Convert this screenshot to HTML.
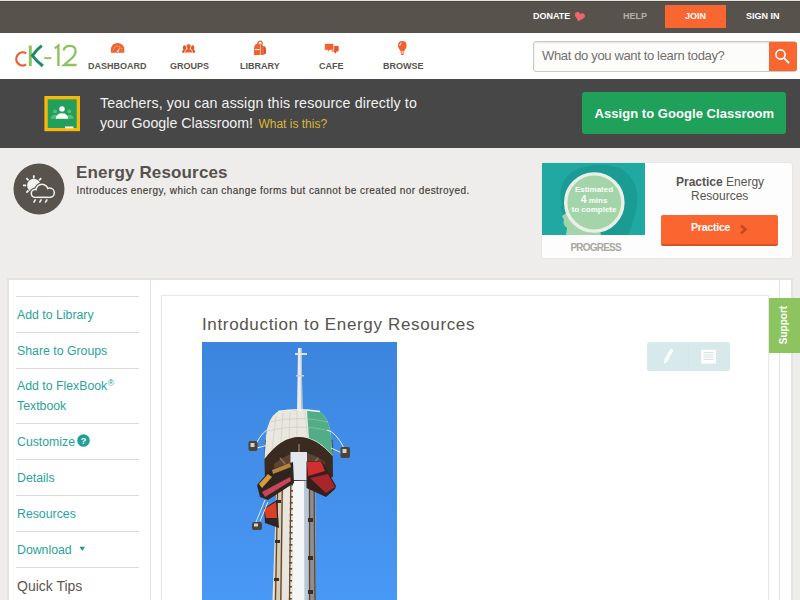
<!DOCTYPE html>
<html><head><meta charset="utf-8">
<style>
*{margin:0;padding:0;box-sizing:border-box}
html,body{width:800px;height:600px;overflow:hidden;background:#eeedeb;font-family:"Liberation Sans",sans-serif}
.a{position:absolute;white-space:nowrap;line-height:1}
#top{position:absolute;left:0;top:1px;width:800px;height:32px;background:#57534c}
#top0{position:absolute;left:0;top:0;width:800px;height:1px;background:#e8e5df}
#top1{position:absolute;left:0;top:1px;width:800px;height:1px;background:#4b4841;z-index:1}
#nav{position:absolute;left:0;top:33px;width:800px;height:46px;background:#fff}
#ban{position:absolute;left:0;top:79px;width:800px;height:69px;background:#474747}
.tb{font-weight:bold;font-size:9px;color:#fff}
.nt{font-weight:bold;font-size:9px;color:#58544e}
.sl{font-size:12.3px;color:#2aa498}
.dv{position:absolute;left:16px;width:123px;height:1px;background:#dcdad6}
</style></head><body>
<div id="top0"></div>
<div id="top"></div><div id="top1"></div>
<!-- top bar items -->
<div class="a tb" style="left:533px;top:12px">DONATE</div>
<svg class="a" style="left:573.5px;top:12px;transform:rotate(14deg)" width="11" height="10" viewBox="0 0 11 10"><path d="M5.5 9.5 L1.2 5.2 C-0.3 3.6 0.4 0.8 2.8 0.6 C4 0.5 5 1.3 5.5 2.2 C6 1.3 7 0.5 8.2 0.6 C10.6 0.8 11.3 3.6 9.8 5.2 Z" fill="#f2636a"/></svg>
<div class="a tb" style="left:623px;top:12px;color:#b4b0a9">HELP</div>
<div class="a" style="left:665px;top:5px;width:61px;height:23px;background:#fa6630"></div>
<div class="a tb" style="left:685px;top:12px">JOIN</div>
<div class="a tb" style="left:746px;top:12px">SIGN IN</div>

<div id="nav"></div>
<!-- logo -->
<svg class="a" style="left:0;top:33px" width="90" height="46" viewBox="0 33 90 46">
 <path d="M26.2 53.2 A6.6 6.6 0 1 0 26.2 64.6" fill="none" stroke="#e8623a" stroke-width="2.3"/>
 <rect x="28.8" y="45.5" width="3" height="20.7" fill="#8dc35e"/>
 <path d="M41.8 45.6 Q36 50 32.4 55.6 Q36 60.5 42.8 66" fill="none" stroke="#1b8c67" stroke-width="3"/>
 <rect x="44.2" y="57.2" width="7" height="1.9" fill="#8dc35e"/>
 <path d="M54.8 48.4 L58.4 45.6 L58.4 66.1" fill="none" stroke="#8dc35e" stroke-width="2.4"/>
 <path d="M63.6 50.5 Q64.5 45.9 69.8 45.9 Q75.6 45.9 75.6 51.2 Q75.6 54.5 71.5 58.5 L64 65 L76.6 65" fill="none" stroke="#8dc35e" stroke-width="2.3"/>
</svg>

<!-- nav items -->
<svg class="a" style="left:110px;top:42px" width="16" height="12" viewBox="110 42 16 12"><path d="M110.9 52.8 L110.9 49.6 A6.7 6.7 0 0 1 124.3 49.6 L124.3 52.8 Z" fill="#f0622f"/><path d="M113.3 50.4 A4.3 4.3 0 0 1 121.9 50.4" fill="none" stroke="#fbd3c2" stroke-width="1" stroke-dasharray="1.1 1"/><path d="M116.4 52 L119.8 47.2 L118.6 52 Z" fill="#fde6dc"/></svg>
<div class="a nt" style="left:88px;top:61.5px">DASHBOARD</div>
<svg class="a" style="left:181px;top:43px" width="16" height="11" viewBox="181 43 16 11"><path d="M182 52.8 Q182 50 183.6 49.6 Q182.6 48.6 182.8 47 Q183.2 45.2 184.6 45.2 Q186 45.2 186.3 47 Q186.5 48.6 185.6 49.6 Q187.2 50 187.2 52.8 Z" fill="#df5530"/><path d="M190 52.8 Q190 50 191.6 49.6 Q190.6 48.6 190.8 47 Q191.2 45.2 192.6 45.2 Q194 45.2 194.3 47 Q194.5 48.6 193.6 49.6 Q195.3 50 195.3 52.8 Z" fill="#df5530"/><path d="M184.6 52.8 Q184.6 49.4 187.2 48.8 Q186 47.6 186.2 45.8 Q186.6 43.8 188.6 43.8 Q190.6 43.8 191 45.8 Q191.2 47.6 190 48.8 Q192.6 49.4 192.6 52.8 Z" fill="#f25f2f" stroke="#fff" stroke-width="0.6"/></svg>
<div class="a nt" style="left:170px;top:61.5px">GROUPS</div>
<svg class="a" style="left:252px;top:40px" width="16" height="16" viewBox="252 40 16 16"><path d="M257.6 44.2 Q258.2 41 260.4 41 Q262.6 41.3 262.2 44.4" stroke="#e05a30" stroke-width="1.2" fill="none"/><path d="M263.2 46 Q266 46.4 266 49.2 L266 53 Q266 54.2 264.6 54.2 L263.2 54.2 Z" fill="#d9552e"/><path d="M254 55 L254 48.4 Q254 43.6 258.7 43.6 Q263.6 43.6 263.6 48.4 L263.6 55 Z" fill="#f0622f"/><path d="M254.8 49.6 L259.6 49.6" stroke="#fff" stroke-width="1"/><path d="M260.4 44.4 L260.4 55" stroke="#fde0d4" stroke-width="0.7"/></svg>
<div class="a nt" style="left:240px;top:61.5px">LIBRARY</div>
<svg class="a" style="left:323px;top:42px" width="17" height="13" viewBox="323 42 17 13"><path d="M331.5 46 L338.6 46 L338.6 51.6 L336.4 51.6 L335.8 53.8 L333.6 51.6 L331.5 51.6 Z" fill="#e4572e"/><path d="M324.6 43.4 L333.8 43.4 L333.8 50.2 L329.6 50.2 L327.4 52.4 L327.6 50.2 L324.6 50.2 Z" fill="#f0622f" stroke="#fff" stroke-width="0.7"/></svg>
<div class="a nt" style="left:319px;top:61.5px">CAFE</div>
<svg class="a" style="left:396px;top:40px" width="13" height="16" viewBox="396 40 13 16"><path d="M402.3 41 Q406.6 41 406.6 45.4 Q406.6 47.6 405.2 49.2 Q404.3 50.2 404.2 51.4 L400.4 51.4 Q400.3 50.2 399.4 49.2 Q398 47.6 398 45.4 Q398 41 402.3 41Z" fill="#f0622f"/><rect x="400.4" y="51.8" width="3.8" height="1.3" fill="#f3a57f"/><path d="M400.6 53.5 L404 53.5 L403.2 55 L401.4 55 Z" fill="#e4572e"/><path d="M399.8 45.6 Q399.8 43.4 401.6 42.8" stroke="#fff" stroke-width="1" fill="none"/></svg>
<div class="a nt" style="left:383px;top:61.5px">BROWSE</div>

<!-- search -->
<div class="a" style="left:533px;top:41px;width:264px;height:31px;border:1.5px solid #cbc8c0;border-radius:3px;background:#fcfcfb;box-shadow:inset 0 1px 2px #e6e4e0"></div>
<div class="a" style="left:542px;top:49px;font-size:13px;color:#72706c;letter-spacing:-0.35px">What do you want to learn today?</div>
<div class="a" style="left:769px;top:42px;width:28px;height:28.5px;background:#fa6630;border-radius:0 2px 2px 0"></div>
<svg class="a" style="left:771.5px;top:45.5px" width="22" height="20" viewBox="0 0 22 20"><circle cx="8.5" cy="8.5" r="4.6" fill="none" stroke="#fff" stroke-width="1.6"/><line x1="12" y1="12" x2="16.5" y2="16.5" stroke="#fff" stroke-width="1.8" stroke-linecap="round"/></svg>

<!-- banner -->
<div id="ban"></div>
<svg class="a" style="left:44px;top:96px" width="36" height="36" viewBox="0 0 36 36">
 <rect x="0.4" y="0" width="35.6" height="35.2" fill="#f8b80c"/>
 <rect x="3.7" y="3.3" width="29" height="28.7" fill="#20a05b"/>
 <circle cx="11" cy="15.4" r="1.9" fill="#5cb97f"/><circle cx="25.3" cy="15.4" r="1.9" fill="#5cb97f"/>
 <path d="M6.6 22.8 Q7 18.7 11 18.7 Q14.4 18.7 14.6 22.8Z M21.6 22.8 Q21.8 18.7 25.3 18.7 Q29.4 18.7 29.7 22.8Z" fill="#5cb97f"/>
 <circle cx="18" cy="12.9" r="2.7" fill="#fff"/>
 <path d="M11.8 22.8 Q12.2 17.3 18 17.3 Q23.8 17.3 24.2 22.8Z" fill="#fff"/>
 <rect x="21" y="30.5" width="8.4" height="1.8" fill="#fff"/>
</svg>
<div class="a" style="left:100px;top:95.5px;font-size:14.2px;color:#f2f2f2;letter-spacing:0.14px">Teachers, you can assign this resource directly to</div>
<div class="a" style="left:100px;top:115.5px;font-size:14.2px;color:#f2f2f2">your Google Classroom! <span style="font-size:12px;color:#dbb735;letter-spacing:0;margin-left:1.5px">What is this?</span></div>
<div class="a" style="left:582px;top:92px;width:204px;height:42px;background:#1fa15a;border-radius:3px"></div>
<div class="a" style="left:594.5px;top:107px;font-size:13px;font-weight:bold;color:#fff;letter-spacing:0.05px">Assign to Google Classroom</div>

<!-- header -->
<svg class="a" style="left:13px;top:163px" width="52" height="52" viewBox="0 0 52 52">
 <circle cx="26" cy="26" r="25.5" fill="#58544d"/>
 <g stroke="#f4f3f0" stroke-width="1.8" stroke-linecap="butt">
  <line x1="20.8" y1="12.3" x2="20.8" y2="15.4"/>
  <line x1="13.4" y1="15.2" x2="15.5" y2="17.3"/>
  <line x1="10" y1="22.4" x2="13.1" y2="22.4"/>
  <line x1="13.4" y1="29.6" x2="15.5" y2="27.5"/>
  <line x1="28.2" y1="15.2" x2="26.1" y2="17.3"/>
 </g>
 <circle cx="20.8" cy="22.4" r="6.7" fill="#f4f3f0"/>
 <g fill="#58544d"><circle cx="22.2" cy="30.4" r="5.8"/><circle cx="29" cy="27.3" r="7.9"/><circle cx="36.7" cy="29.7" r="6.5"/><rect x="22" y="28" width="15" height="8.2"/></g>
 <g fill="#f4f3f0"><circle cx="22.2" cy="30.4" r="4.65"/><circle cx="29" cy="27.3" r="6.75"/><circle cx="36.7" cy="29.7" r="5.35"/><rect x="22.2" y="29.7" width="14.5" height="5.35"/></g>
 <g fill="#58544d"><circle cx="22.2" cy="30.4" r="3.15"/><circle cx="29" cy="27.3" r="5.25"/><circle cx="36.7" cy="29.7" r="3.85"/><rect x="22.2" y="29.7" width="14.5" height="3.85"/></g>
 <g stroke="#f4f3f0" stroke-width="1.6">
  <line x1="22.6" y1="36.4" x2="20.6" y2="39.6"/>
  <line x1="28.4" y1="36.4" x2="26.4" y2="39.6"/>
  <line x1="34.2" y1="36.4" x2="32.2" y2="39.6"/>
 </g>
</svg>
<div class="a" style="left:76px;top:164px;font-size:17px;font-weight:bold;color:#55524c;letter-spacing:0.15px">Energy Resources</div>
<div class="a" style="left:76.5px;top:185.5px;font-size:10px;color:#3f3b36;letter-spacing:0.44px;-webkit-text-stroke:0.15px #3f3b36">Introduces energy, which can change forms but cannot be created nor destroyed.</div>

<!-- practice card -->
<div class="a" style="left:542px;top:163px;width:250px;height:94.5px;background:#fdfdfd;border-radius:2px;box-shadow:0 0 1.5px #cfcdc8"></div>
<svg class="a" style="left:542px;top:163px" width="103" height="72" viewBox="542 163 103 72">
 <rect x="542" y="163" width="103" height="72" fill="#1fa9a2"/>
 <path d="M567 235 L566 222 Q561 218 563 213 Q559 208 562 204 Q556 184 572 172 Q595 160 620 168 Q640 180 637 205 Q634 222 628 235 Z" fill="#1a9b94"/>
 <path d="M566 235 L567 228 Q562 224 564 220 L562 216 L566 213 Q564 210 567 206 L580 222 L600 231 L601 235 Z" fill="#a4d5aa"/>
 <circle cx="594.3" cy="202.5" r="28.6" fill="#a4d5aa" stroke="#ecefe6" stroke-width="3.4"/>
 <text x="594" y="192.3" text-anchor="middle" font-family="Liberation Sans" font-weight="bold" font-size="8" fill="#fbfdf8">Estimated</text>
 <text x="594" y="202.9" text-anchor="middle" font-family="Liberation Sans" font-weight="bold" font-size="8" fill="#fbfdf8"><tspan font-size="10.5">4</tspan> mins</text>
 <text x="594" y="211.6" text-anchor="middle" font-family="Liberation Sans" font-weight="bold" font-size="8" fill="#fbfdf8">to complete</text>
</svg>
<div class="a" style="left:570.5px;top:242.5px;font-size:10px;font-weight:bold;color:#aaa7a1;letter-spacing:-0.8px">PROGRESS</div>
<div class="a" style="left:676px;top:176px;font-size:12px;color:#58544e"><b>Practice</b> Energy</div>
<div class="a" style="left:691px;top:190px;font-size:12px;color:#58544e">Resources</div>
<div class="a" style="left:661px;top:215px;width:117px;height:31px;background:#fb6530;border-bottom:2px solid #d8521f;border-radius:2px"></div>
<div class="a" style="left:691px;top:222px;font-size:10.5px;font-weight:bold;color:#fff;letter-spacing:-0.2px">Practice</div>
<svg class="a" style="left:739px;top:224px" width="9" height="11" viewBox="0 0 9 11"><path d="M2 1.5 L6.5 5.5 L2 9.5" fill="none" stroke="#c44a1e" stroke-width="2.6"/></svg>

<!-- lower panels -->
<div class="a" style="left:7px;top:278px;width:786px;height:330px;background:#e4e3e0"></div>
<div class="a" style="left:9px;top:280px;width:141px;height:330px;background:#fff"></div>
<div class="a" style="left:151px;top:280px;width:628px;height:330px;background:#fff"></div>
<div class="a" style="left:780px;top:280px;width:11px;height:330px;background:#fff"></div>
<div class="a" style="left:161px;top:295px;width:608px;height:320px;border:1px solid #e8e8e8;box-shadow:0 0 1px #ececec;background:#fff"></div>

<div class="dv" style="top:296px"></div>
<div class="a sl" style="left:17px;top:308.5px">Add to Library</div>
<div class="dv" style="top:332px"></div>
<div class="a sl" style="left:17px;top:344.5px">Share to Groups</div>
<div class="dv" style="top:368px"></div>
<div class="a sl" style="left:17px;top:379px">Add to FlexBook<sup style="font-size:8.5px;vertical-align:3.5px;margin-left:0.5px">®</sup></div>
<div class="a sl" style="left:17px;top:399.5px">Textbook</div>
<div class="dv" style="top:423px"></div>
<div class="a sl" style="left:17px;top:435.5px">Customize</div>
<svg class="a" style="left:77px;top:434px" width="13" height="13" viewBox="0 0 13 13"><circle cx="6.5" cy="6.5" r="6.3" fill="#1fa294"/><text x="6.5" y="10" text-anchor="middle" font-family="Liberation Sans" font-weight="bold" font-size="9" fill="#fff">?</text></svg>
<div class="dv" style="top:459px"></div>
<div class="a sl" style="left:17px;top:471.5px">Details</div>
<div class="dv" style="top:495px"></div>
<div class="a sl" style="left:17px;top:507.5px">Resources</div>
<div class="dv" style="top:531px"></div>
<div class="a sl" style="left:17px;top:543.5px">Download</div>
<svg class="a" style="left:78.5px;top:545.5px" width="7" height="6" viewBox="0 0 7 6"><path d="M0.5 0.8 L6 0.8 L3.25 5Z" fill="#1f9c91"/></svg>
<div class="dv" style="top:567px"></div>
<div class="a" style="left:17px;top:579px;font-size:14px;color:#5a5650">Quick Tips</div>

<div class="a" style="left:202px;top:316px;font-size:17px;color:#57534d;letter-spacing:0.65px">Introduction to Energy Resources</div>
<svg class="a" style="left:202px;top:342px" width="195" height="258" viewBox="202 342 195 258">
 <defs><linearGradient id="sky" x1="0" y1="0" x2="0" y2="1"><stop offset="0" stop-color="#3c85de"/><stop offset="1" stop-color="#4898f5"/></linearGradient></defs>
 <rect x="202" y="342" width="195" height="258" fill="url(#sky)"/>
 <!-- antenna -->
 <path d="M298 348 L301.5 348 L302.5 412 L297 412 Z" fill="#e9ecef"/>
 <path d="M300.5 348 L301.5 348 L302.5 412 L301 412 Z" fill="#b9c3cc"/>
 <rect x="295" y="353" width="12" height="2" fill="#dfe4e8"/>
 <rect x="296" y="375" width="8" height="1.5" fill="#c9d0d6"/>
 <!-- column -->
 <path d="M277 470 L315 470 L316 600 L272.5 600 Z" fill="#e9e6df"/>
 <path d="M293 470 L304 470 L304.5 600 L293 600 Z" fill="#f5f6f7"/>
 <path d="M304 470 L309 470 L309 600 L304.5 600 Z" fill="#b7c6d8"/>
 <path d="M309 470 L315 470 L316 600 L309 600 Z" fill="#8a8f96"/>
 <path d="M276.5 470 L283.5 470 L282 600 L274 600 Z" fill="#d9cdb4"/>
 <g stroke="#5f4428" stroke-width="1.3" fill="none">
  <line x1="278" y1="470" x2="275.5" y2="600"/>
  <line x1="282.5" y1="470" x2="280.8" y2="600"/>
  <line x1="291" y1="470" x2="289.5" y2="600"/>
  <line x1="309.5" y1="470" x2="309.5" y2="600"/>
  <line x1="314" y1="470" x2="315" y2="600"/>
 </g>
 <g fill="#6a4a2a"><rect x="290.0" y="484" width="3" height="1.6"/><rect x="290.0" y="490" width="3" height="1.6"/><rect x="289.9" y="496" width="3" height="1.6"/><rect x="289.8" y="502" width="3" height="1.6"/><rect x="289.8" y="508" width="3" height="1.6"/><rect x="289.7" y="514" width="3" height="1.6"/><rect x="289.6" y="520" width="3" height="1.6"/><rect x="289.6" y="526" width="3" height="1.6"/><rect x="289.5" y="532" width="3" height="1.6"/><rect x="289.5" y="538" width="3" height="1.6"/><rect x="289.4" y="544" width="3" height="1.6"/><rect x="289.3" y="550" width="3" height="1.6"/><rect x="289.3" y="556" width="3" height="1.6"/><rect x="289.2" y="562" width="3" height="1.6"/><rect x="289.1" y="568" width="3" height="1.6"/><rect x="289.1" y="574" width="3" height="1.6"/><rect x="289.0" y="580" width="3" height="1.6"/><rect x="288.9" y="586" width="3" height="1.6"/><rect x="288.9" y="592" width="3" height="1.6"/><rect x="288.8" y="598" width="3" height="1.6"/></g>
 <g fill="#3a2e24">
  <rect x="308" y="480" width="5" height="4"/><rect x="308" y="518" width="5" height="4"/><rect x="308" y="556" width="5" height="4"/><rect x="308" y="590" width="5" height="4"/>
  <rect x="276" y="500" width="5" height="3"/><rect x="275" y="540" width="5" height="3"/><rect x="274" y="578" width="5" height="3"/>
 </g>
 <!-- dome underside -->
 <path d="M264.5 462 L265 440 Q299 418 332.5 440 L333 477 Q299 484 265 479 Z" fill="#3a2a1f"/>
 <path d="M274 464 Q299 442 325 462 L323 475 Q299 481 275 476 Z" fill="#5b4431"/>
 <path d="M280 458 L287 466 M318 458 L312 466 M299 444 L299 455" stroke="#8a7355" stroke-width="1.5"/>
 <path d="M290.5 452 L307 452 L307 480 L290.5 480 Z" fill="#e3e8ee"/>
 <!-- dome band -->
 <path d="M277 412 Q299 409 320.5 412 Q329 418 331 436 L332.5 456 Q316 437 299 437 Q281 437 264.5 459 L266 436 Q268 418 277 412 Z" fill="#e9e7de"/>
 <path d="M307 411 Q315 411 320.5 412 Q329 418 331 436 L332.5 456 Q322 442 309 438 Z" fill="#4fae86"/>
 <path d="M305 411 L307.5 438" stroke="#d8e0d6" stroke-width="1.4"/>
 <path d="M278 411.5 Q299 408 320 411.5" stroke="#f6f6f2" stroke-width="1.4" fill="none"/>
 <g stroke="#c6c3b6" stroke-width="0.5" fill="none">
  <path d="M270 422 Q299 415 328 422"/>
  <path d="M267 431 Q299 423 331 431"/>
  <line x1="276" y1="416" x2="272" y2="450"/><line x1="283" y1="413" x2="281" y2="442"/><line x1="290" y1="412" x2="289" y2="438"/><line x1="297" y1="411" x2="297" y2="437"/>
 </g>
 <!-- arms and lamps -->
 <path d="M271 428 Q263 430 256 444 M268 445 L257 448" stroke="#e8ecef" stroke-width="1" fill="none"/>
 <path d="M327 430 Q336 432 344 448 M331 448 L342 453" stroke="#e8ecef" stroke-width="1" fill="none"/>
 <rect x="248.5" y="441" width="9" height="10" rx="2" fill="#4a4338"/>
 <rect x="250.5" y="443" width="4" height="4" fill="#d9d3c2"/>
 <rect x="340.5" y="447" width="9.5" height="11" rx="2" fill="#4a4338"/>
 <rect x="342.5" y="449" width="4" height="4" fill="#d9d3c2"/>
 <!-- gondolas -->
 <path d="M257 485 L270 470 L293 462 L294 483 L268 500 L260 497 Z" fill="#2e2520"/>
 <path d="M262 492 L290 477 L291 481 L265 497 Z" fill="#c9455a"/>
 <path d="M259 484 L268 474 L272 477 L262 488 Z" fill="#d89a3a"/>
 <path d="M272 470 L290 463 L291 467 L273 474 Z" fill="#b8863a"/>
 <path d="M306.5 461.5 L322 461 L336 486 L335 489 L326 497 L306.5 488 Z" fill="#35201c"/>
 <path d="M307 462 L321 461.5 L325 471 L308 476 Z" fill="#d22d2f"/>
 <path d="M310 478 L328 474 L335 487 L326 493 Z" fill="#a8262a"/>
 <path d="M264 508 L277 500 L279 528 L265 523 Z" fill="#2e2520"/>
 <path d="M264 509 L276 502 L277 518 L266 518 Z" fill="#d8402a"/>
 <path d="M265 500 L256 522" stroke="#e9edf0" stroke-width="0.9" fill="none"/>
 <path d="M268 502 L260 521" stroke="#e9edf0" stroke-width="0.9" fill="none"/>
 <rect x="252" y="522" width="10" height="8" rx="2" fill="#4a4338"/>
 <rect x="254" y="523.5" width="4" height="3" fill="#d9d3c2"/>
</svg>

<div class="a" style="left:647px;top:342px;width:83px;height:29px;background:#d7e9eb;border-radius:3px"></div>
<div class="a" style="left:688px;top:345px;width:1px;height:23px;background:#d3e6e7"></div>
<svg class="a" style="left:660px;top:346px" width="18" height="20" viewBox="660 346 18 20"><path d="M670.8 348.6 L673.6 350.2 L667.4 361.2 L664 364 L664.4 359.6 Z" fill="#fff"/><path d="M665.6 360.2 L667 361" stroke="#d6e9ea" stroke-width="0.8"/></svg>
<svg class="a" style="left:700px;top:348px" width="18" height="18" viewBox="700 348 18 18"><rect x="701.2" y="349.8" width="14.7" height="13.8" fill="#fff"/><g stroke="#c9dfe1" stroke-width="0.9"><line x1="703.5" y1="352.6" x2="713.5" y2="352.6"/><line x1="703.5" y1="354.9" x2="713.5" y2="354.9"/><line x1="703.5" y1="357.1" x2="713.5" y2="357.1"/><line x1="703.5" y1="359.4" x2="713.5" y2="359.4"/></g></svg>

<div class="a" style="left:769px;top:298px;width:31px;height:55px;background:#8dc45f"></div>
<div class="a" style="left:756px;top:320px;width:55px;text-align:center;font-size:10px;font-weight:bold;color:#fff;transform:rotate(-90deg)">Support</div>
</body></html>
